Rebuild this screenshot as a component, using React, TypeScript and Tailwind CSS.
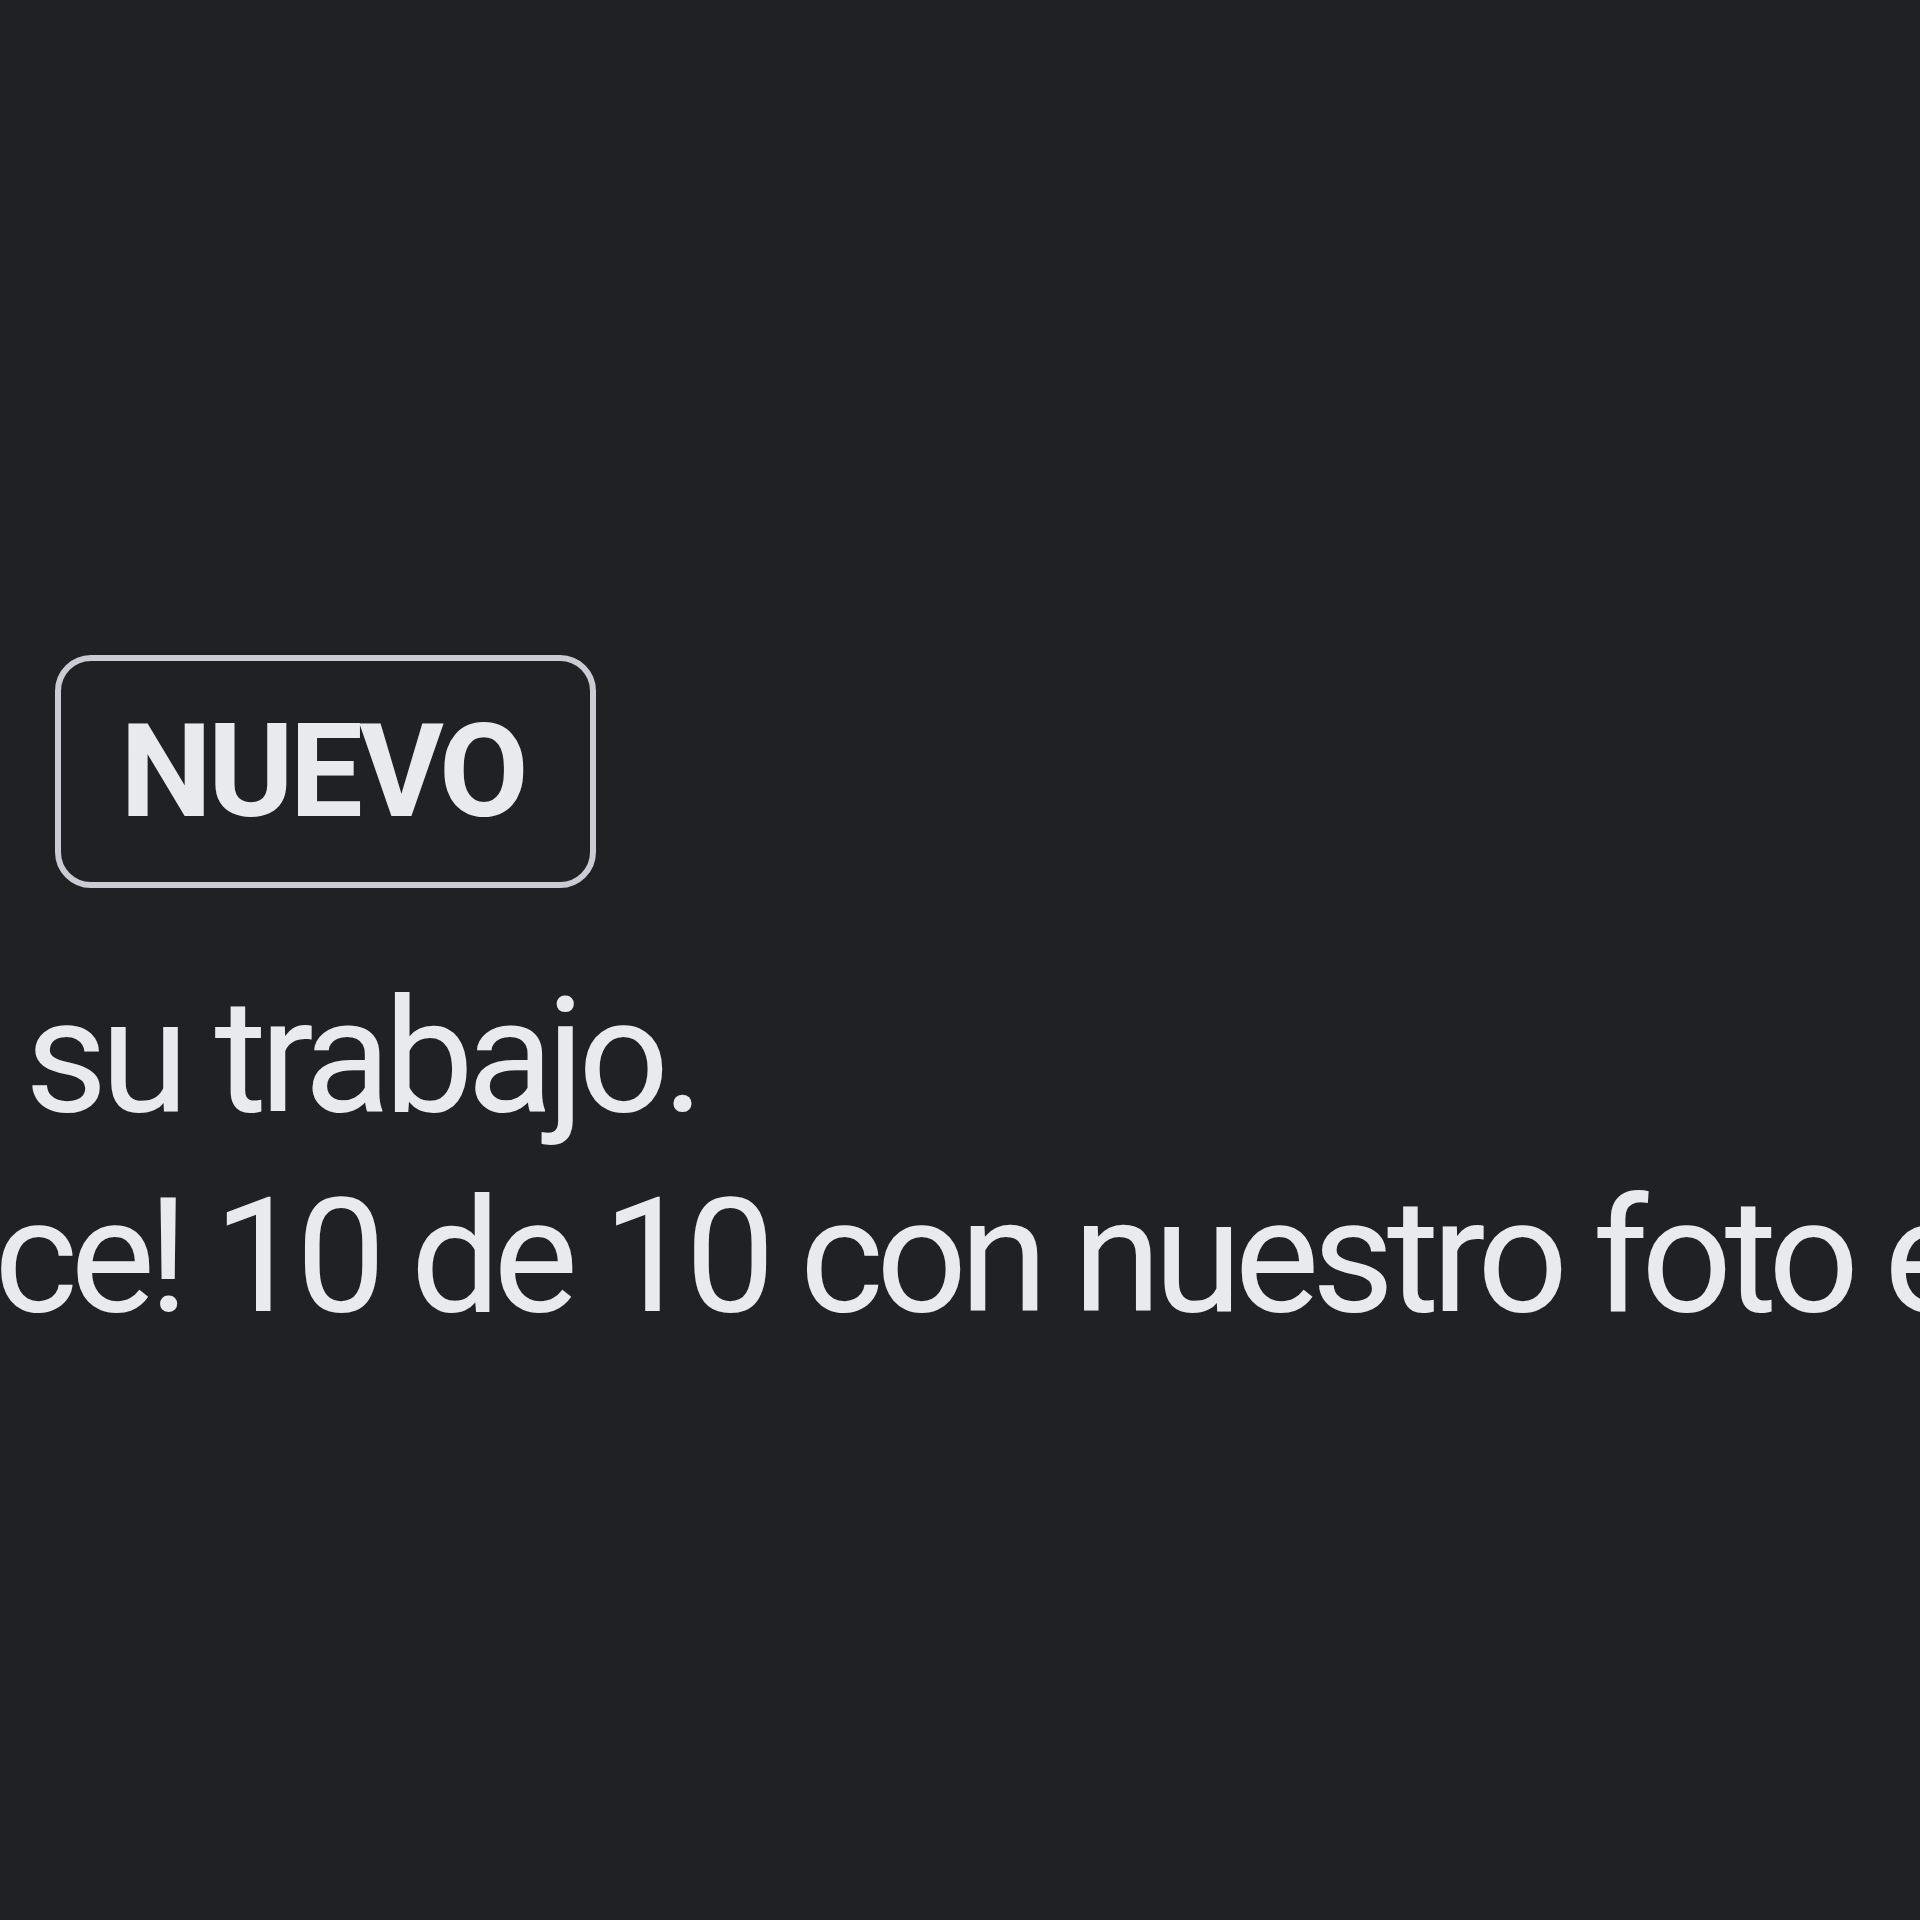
const App = () => {
  return (
    <div className="w-[1920px] h-[1920px] overflow-hidden bg-[#202124] text-[#e8eaed] font-['Roboto',sans-serif]">
      <div className="pt-[655px] pl-[55px]">
        <span className="inline-flex items-center justify-center w-[541px] h-[233px] rounded-[36px] border-[6px] border-[#c9ccd2] text-[130px] leading-[130px] font-bold tracking-[-4px] pt-[1px] pr-[6px]">
          NUEVO
        </span>
      </div>

      <div className="mt-[69px] text-[160px] leading-[200px] tracking-[-7px] whitespace-nowrap">
        <p className="flex">
          <span className="w-[25px] shrink-0 flex justify-end">
            <span className="shrink-0 whitespace-pre">Mejore </span>
          </span>
          <span>su trabajo.</span>
        </p>
        <p className="flex">
          <span className="w-0 shrink-0 flex justify-end">
            <span className="shrink-0 whitespace-pre">¡Lu</span>
          </span>
          <span className="ml-[-6px] tracking-[-7.5px]">ce! 10 de 10 con nuestro foto editor.</span>
        </p>
      </div>
    </div>
  );
};

export default App;
